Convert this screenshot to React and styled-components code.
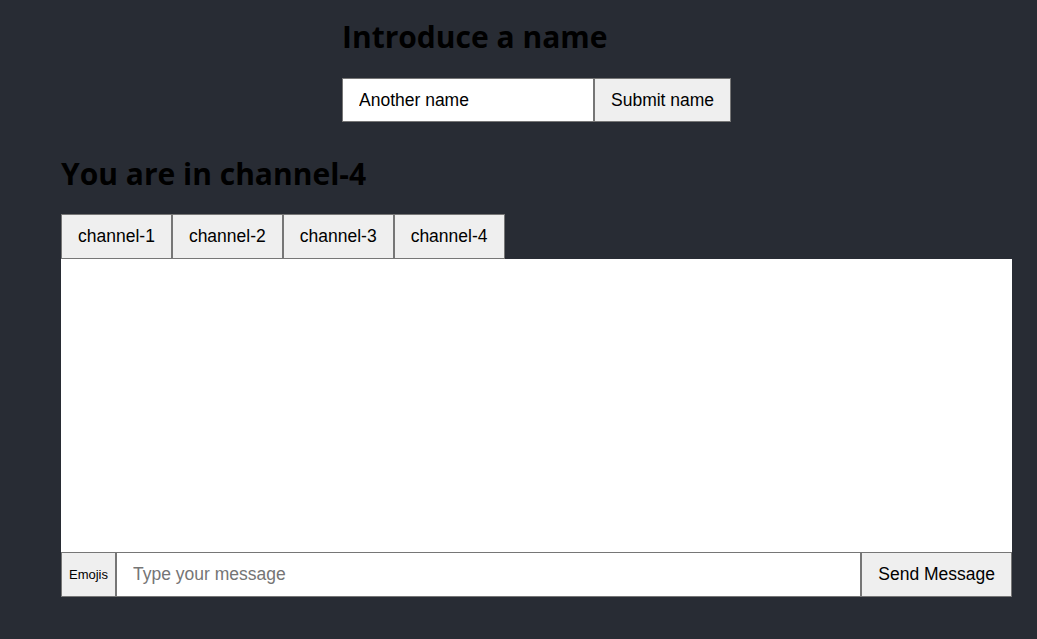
import styled, { createGlobalStyle } from 'styled-components'

const GlobalStyle = createGlobalStyle`
  html, body {
    margin: 0;
    padding: 0;
    background: #282c34;
  }
  body {
    font-family: 'Liberation Sans', Arial, sans-serif;
  }
`

const Page = styled.div`
  width: 951px;
  margin-left: 61px;
  padding-top: 16px;
  display: flex;
  flex-direction: column;
`

const NameSection = styled.section`
  margin-left: 281px;
  display: flex;
  flex-direction: column;
`

const Title = styled.h1`
  margin: 0;
  font-family: 'Open Sans', 'Noto Sans', sans-serif;
  font-weight: 700;
  font-size: 30px;
  line-height: 42px;
  color: #000;
`

const Form = styled.form`
  display: flex;
  margin-top: 20px;
`

const Field = styled.input`
  box-sizing: border-box;
  width: ${p => p.$width || 'auto'};
  flex: ${p => (p.$grow ? 1 : 'none')};
  height: ${p => p.$height || '44px'};
  margin: 0;
  padding: 0 16px;
  border: 1px solid #767676;
  background: #fff;
  font-family: 'Liberation Sans', Arial, sans-serif;
  font-size: 17.5px;
  color: #000;
  outline: none;
  &::placeholder {
    color: #757575;
  }
`

const Button = styled.button`
  box-sizing: border-box;
  height: ${p => p.$height || '44px'};
  margin: 0;
  padding: 0 ${p => p.$padX || '16px'};
  border: 1px solid #767676;
  border-radius: 0;
  background: #efefef;
  font-family: 'Liberation Sans', Arial, sans-serif;
  font-size: ${p => p.$size || '17.5px'};
  color: #000;
  cursor: pointer;
`

const ChatSection = styled.section`
  margin-top: 31px;
  display: flex;
  flex-direction: column;
`

const Tabs = styled.div`
  display: flex;
  margin-top: 19px;
`

const Messages = styled.div`
  height: 293px;
  background: #fff;
`

const Composer = styled.div`
  display: flex;
`

const channels = ['channel-1', 'channel-2', 'channel-3', 'channel-4']

export default function App() {
  return (
    <>
      <GlobalStyle />
      <Page>
        <NameSection>
          <Title>Introduce a name</Title>
          <Form onSubmit={e => e.preventDefault()}>
            <Field $width="252px" defaultValue="Another name" />
            <Button type="submit">Submit name</Button>
          </Form>
        </NameSection>

        <ChatSection>
          <Title>You are in channel-4</Title>
          <Tabs>
            {channels.map(c => (
              <Button key={c} $height="45px">{c}</Button>
            ))}
          </Tabs>
          <Messages />
          <Composer>
            <Button $height="45px" $size="13px" $padX="7px">Emojis</Button>
            <Field $grow $height="45px" placeholder="Type your message" />
            <Button $height="45px">Send Message</Button>
          </Composer>
        </ChatSection>
      </Page>
    </>
  )
}
